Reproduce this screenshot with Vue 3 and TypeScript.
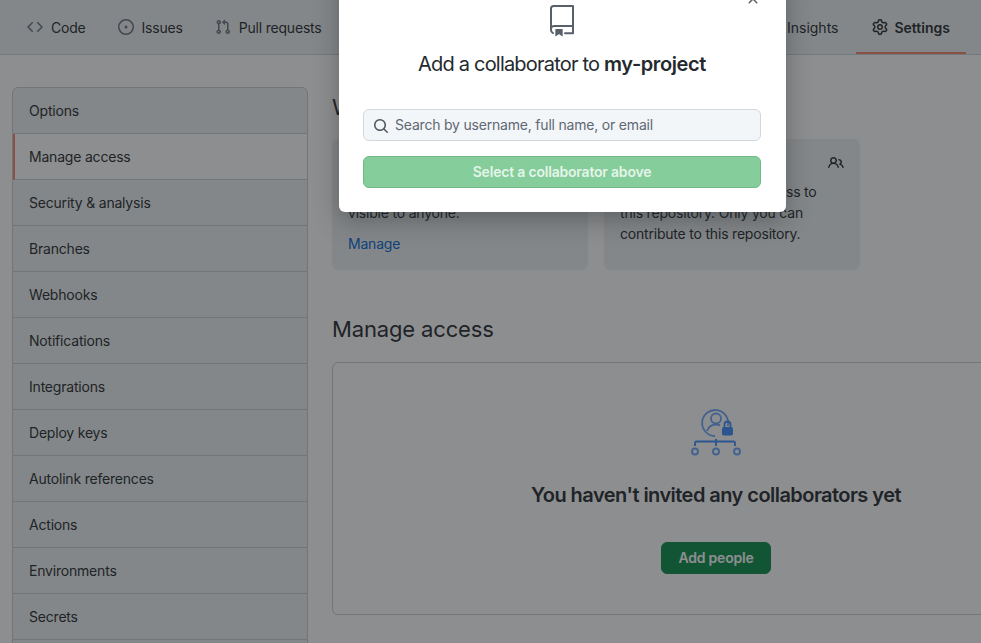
<script setup lang="ts">
const icons: Record<string, string> = {
  code: 'M4.72 3.22a.75.75 0 011.06 1.06L2.06 8l3.72 3.72a.75.75 0 11-1.06 1.06L.47 8.53a.75.75 0 010-1.06l4.25-4.25zm6.56 0a.75.75 0 10-1.06 1.06L13.94 8l-3.72 3.72a.75.75 0 101.06 1.06l4.25-4.25a.75.75 0 000-1.06l-4.25-4.25z',
  issue: 'M8 9.5a1.5 1.5 0 100-3 1.5 1.5 0 000 3zM8 0a8 8 0 100 16A8 8 0 008 0zM1.5 8a6.5 6.5 0 1113 0 6.5 6.5 0 01-13 0z',
  pull: 'M7.177 3.073L9.573.677A.25.25 0 0110 .854v4.792a.25.25 0 01-.427.177L7.177 3.427a.25.25 0 010-.354zM3.75 2.5a.75.75 0 100 1.5.75.75 0 000-1.5zm-2.25.75a2.25 2.25 0 113 2.122v5.256a2.251 2.251 0 11-1.5 0V5.372A2.25 2.25 0 011.5 3.25zM11 2.5h-1V4h1a1 1 0 011 1v5.628a2.251 2.251 0 101.5 0V5A2.5 2.5 0 0011 2.5zm1 10.25a.75.75 0 111.5 0 .75.75 0 01-1.5 0zM3.75 12a.75.75 0 100 1.5.75.75 0 000-1.5z',
  gear: 'M7.429 1.525a6.593 6.593 0 011.142 0c.036.003.108.036.137.146l.289 1.105c.147.56.55.967.997 1.189.174.086.341.183.501.29.417.278.97.423 1.53.27l1.102-.303c.11-.03.175.016.195.046.219.31.41.641.573.989.014.031.022.11-.059.19l-.815.806c-.411.406-.562.957-.53 1.456a4.588 4.588 0 010 .582c-.032.499.119 1.05.53 1.456l.815.806c.08.08.073.159.059.19a6.494 6.494 0 01-.573.99c-.02.029-.086.074-.195.045l-1.103-.303c-.559-.153-1.112-.008-1.529.27-.16.107-.327.204-.5.29-.449.222-.851.628-.998 1.189l-.289 1.105c-.029.11-.101.143-.137.146a6.613 6.613 0 01-1.142 0c-.036-.003-.108-.037-.137-.146l-.289-1.105c-.147-.56-.55-.967-.997-1.189a4.502 4.502 0 01-.501-.29c-.417-.278-.97-.423-1.53-.27l-1.102.303c-.11.03-.175-.016-.195-.046a6.492 6.492 0 01-.573-.989c-.014-.031-.022-.11.059-.19l.815-.806c.411-.406.562-.957.53-1.456a4.587 4.587 0 010-.582c.032-.499-.119-1.05-.53-1.456l-.815-.806c-.08-.08-.073-.159-.059-.19a6.44 6.44 0 01.573-.99c.02-.029.086-.075.195-.045l1.103.303c.559.153 1.112.008 1.529-.27.16-.107.327-.204.5-.29.449-.222.851-.628.998-1.189l.289-1.105c.029-.11.101-.143.137-.146zM8 0c-.236 0-.47.01-.701.03-.743.065-1.29.615-1.458 1.261l-.29 1.106c-.017.066-.078.158-.211.224a5.994 5.994 0 00-.668.386c-.123.082-.233.09-.3.071L3.27 2.776c-.644-.177-1.392.02-1.82.63a7.977 7.977 0 00-.704 1.217c-.315.675-.111 1.422.363 1.891l.815.806c.05.048.098.147.088.294a6.084 6.084 0 000 .772c.01.147-.038.246-.088.294l-.815.806c-.474.469-.678 1.216-.363 1.891.2.428.436.835.704 1.218.428.609 1.176.806 1.82.63l1.103-.303c.066-.019.176-.011.299.071.213.143.436.272.668.386.133.066.194.158.212.224l.289 1.106c.169.646.715 1.196 1.458 1.26a8.094 8.094 0 001.402 0c.743-.064 1.29-.614 1.458-1.26l.29-1.106c.017-.066.078-.158.211-.224a5.98 5.98 0 00.668-.386c.123-.082.233-.09.3-.071l1.102.302c.644.177 1.392-.02 1.82-.63.268-.382.505-.789.704-1.217.315-.675.111-1.422-.364-1.891l-.814-.806c-.05-.048-.098-.147-.088-.294a6.1 6.1 0 000-.772c-.01-.147.039-.246.088-.294l.814-.806c.475-.469.679-1.216.364-1.891a7.992 7.992 0 00-.704-1.218c-.428-.609-1.176-.806-1.82-.63l-1.103.303c-.066.019-.176.011-.299-.071a5.991 5.991 0 00-.668-.386c-.133-.066-.194-.158-.212-.224L10.16 1.29C9.99.645 9.444.095 8.701.031A8.094 8.094 0 008 0zm1.5 8a1.5 1.5 0 11-3 0 1.5 1.5 0 013 0zM11 8a3 3 0 11-6 0 3 3 0 016 0z',
  search: 'M11.5 7a4.499 4.499 0 11-8.998 0A4.499 4.499 0 0111.5 7zm-.82 4.74a6 6 0 111.06-1.06l3.04 3.04a.75.75 0 11-1.06 1.06l-3.04-3.04z',
  people: 'M5.5 3.5a2 2 0 100 4 2 2 0 000-4zM2 5.5a3.5 3.5 0 115.898 2.549 5.507 5.507 0 013.034 4.084.75.75 0 11-1.482.235 4.001 4.001 0 00-7.9 0 .75.75 0 01-1.482-.236A5.507 5.507 0 013.102 8.05 3.49 3.49 0 012 5.5zM11 4a.75.75 0 100 1.5 1.5 1.5 0 01.666 2.844.75.75 0 00-.416.672v.352a.75.75 0 00.574.73c1.2.289 2.162 1.2 2.522 2.372a.75.75 0 101.434-.44 5.01 5.01 0 00-2.56-3.012A3 3 0 0011 4z',
  close: 'M3.72 3.72a.75.75 0 011.06 0L8 6.94l3.22-3.22a.75.75 0 111.06 1.06L9.06 8l3.22 3.22a.75.75 0 11-1.06 1.06L8 9.06l-3.22 3.22a.75.75 0 01-1.06-1.06L6.94 8 3.72 4.78a.75.75 0 010-1.06z',
}

const leftTabs = [
  { label: 'Code', icon: 'code' },
  { label: 'Issues', icon: 'issue' },
  { label: 'Pull requests', icon: 'pull' },
]

const sideItems = [
  'Options',
  'Manage access',
  'Security & analysis',
  'Branches',
  'Webhooks',
  'Notifications',
  'Integrations',
  'Deploy keys',
  'Autolink references',
  'Actions',
  'Environments',
  'Secrets',
  '',
]
</script>

<template>
  <div class="page">
    <header class="tabs">
      <a v-for="tab in leftTabs" :key="tab.label" class="tab">
        <svg class="icon" width="16" height="16" viewBox="0 0 16 16"><path fill-rule="evenodd" :d="icons[tab.icon]" /></svg>
        {{ tab.label }}
      </a>
      <a class="tab tab-right">Insights</a>
      <a class="tab tab-active">
        <svg class="icon" width="16" height="16" viewBox="0 0 16 16"><path fill-rule="evenodd" :d="icons.gear" /></svg>
        Settings
      </a>
    </header>

    <div class="layout">
      <nav class="sidebar">
        <a
          v-for="item in sideItems"
          :key="item"
          class="side-item"
          :class="{ 'side-active': item === 'Manage access' }"
        >{{ item }}</a>
      </nav>

      <main class="content">
        <h2 class="heading who">Who has access</h2>
        <div class="cards">
          <div class="card">
            <div class="card-title">Public repository</div>
            <p>This repository is public and visible to anyone.</p>
            <a class="link">Manage</a>
          </div>
          <div class="card">
            <div class="card-title">
              Direct access
              <svg class="card-icon" width="16" height="16" viewBox="0 0 16 16"><path fill-rule="evenodd" :d="icons.people" /></svg>
            </div>
            <p>0 collaborators have access to this repository. Only you can contribute to this repository.</p>
          </div>
        </div>

        <h2 class="heading">Manage access</h2>
        <section class="empty">
          <svg class="empty-art" width="52" height="52" viewBox="0 0 52 52" fill="none">
            <path d="M37.8 20A13 13 0 1 0 25 30" stroke="#6aa6ff" stroke-width="1.8" />
            <circle cx="26" cy="12.5" r="5" stroke="#6aa6ff" stroke-width="1.8" />
            <path d="M17 25c1.5-4 5-6.500 9-6.500 1.500 0 3 .3 4 1" stroke="#6aa6ff" stroke-width="1.8" />
            <rect x="32.500" y="21.500" width="10" height="7.500" rx="1" fill="#3a8cff" stroke="#3a8cff" />
            <path d="M34.500 21.500V18.500a3 3 0 0 1 6 0v3" stroke="#3a8cff" stroke-width="1.800" />
            <path d="M5 40v-3a1.500 1.500 0 0 1 1.500-1.500h37a1.500 1.500 0 0 1 1.500 1.500v3" stroke="#3a8cff" stroke-width="1.800" />
            <path d="M26 33v7" stroke="#3a8cff" stroke-width="1.800" />
            <circle cx="5" cy="45.500" r="3" stroke="#6aa6ff" stroke-width="2" />
            <circle cx="26" cy="45.500" r="3" stroke="#6aa6ff" stroke-width="2" />
            <circle cx="47" cy="45.500" r="3" stroke="#6aa6ff" stroke-width="2" />
          </svg>
          <h3 class="empty-title">You haven't invited any collaborators yet</h3>
          <button class="add-btn">Add people</button>
        </section>
      </main>
    </div>

    <div class="overlay"></div>

    <div class="modal">
      <svg class="modal-close" width="16" height="16" viewBox="0 0 16 16"><path fill-rule="evenodd" :d="icons.close" /></svg>
      <svg class="repo-icon" width="32" height="32" viewBox="0 0 24 24">
        <path fill-rule="evenodd" d="M3 2.750A2.750 2.750 0 0 1 5.750 0h14.500a.75.75 0 0 1 .75.75v20.500a.75.75 0 0 1-.75.75h-6a.75.75 0 0 1 0-1.500h5.250v-4H6A1.500 1.500 0 0 0 4.500 18v.75c0 .716.43 1.334 1.050 1.605a.75.75 0 0 1-.6 1.374A3.250 3.250 0 0 1 3 18.750v-16zM19.500 1.500V15H6c-.546 0-1.059.146-1.500.401V2.750c0-.69.56-1.250 1.250-1.250H19.500z" />
        <path d="M7 18.250a.25.25 0 0 1 .25-.25h5a.25.25 0 0 1 .25.25v5.010a.25.25 0 0 1-.397.201l-2.206-1.604a.25.25 0 0 0-.294 0L7.397 23.460a.25.25 0 0 1-.397-.2v-5.010z" />
      </svg>
      <h1 class="modal-title">Add a collaborator to <strong>my-project</strong></h1>
      <div class="search">
        <svg class="search-icon" width="16" height="16" viewBox="0 0 16 16"><path fill-rule="evenodd" :d="icons.search" /></svg>
        <span class="placeholder">Search by username, full name, or email</span>
      </div>
      <button class="select-btn" disabled>Select a collaborator above</button>
    </div>
  </div>
</template>

<style>
html,
body {
  margin: 0;
  overflow: hidden;
}
</style>

<style scoped>
.page {
  position: relative;
  width: 981px;
  height: 643px;
  overflow: hidden;
  background: #ffffff;
  color: #24292e;
  font-family: Inter, "Liberation Sans", sans-serif;
  font-size: 14px;
  letter-spacing: -0.2px;
}

.tabs {
  display: flex;
  box-sizing: border-box;
  height: 55px;
  padding: 0 15px 0 11px;
  background: #ecf1f3;
  border-bottom: 1px solid #ccd2d6;
}

.tab {
  display: flex;
  align-items: center;
  gap: 8px;
  padding: 0 16px;
  height: 54px;
  box-sizing: border-box;
}

.icon {
  fill: #6a737d;
}

.tab-right {
  margin-left: auto;
  padding-right: 18px;
  letter-spacing: 0;
}

.tab-active {
  font-weight: 600;
  letter-spacing: 0;
  border-bottom: 2px solid #f9826c;
  padding-top: 2px;
  gap: 6px;
}

.tab-active .icon {
  fill: #24292e;
}

.layout {
  display: flex;
  align-items: flex-start;
  gap: 24px;
  padding: 32px 0 0 12px;
}

.sidebar {
  flex: none;
  display: flex;
  flex-direction: column;
  width: 296px;
  box-sizing: border-box;
  background: #ecf1f3;
  border: 1px solid #c8ced3;
  border-radius: 6px;
}

.side-item {
  display: flex;
  align-items: center;
  box-sizing: border-box;
  height: 46px;
  padding-left: 16px;
  border-bottom: 1px solid #c8ced3;
}

.side-active {
  background: #ffffff;
  padding-left: 14px;
  border-left: 2px solid #f9826c;
}

.content {
  flex: none;
  width: 768px;
}

.heading {
  margin: 0;
  font-size: 22px;
  line-height: 32px;
  font-weight: 400;
  letter-spacing: -0.15px;
}

.who {
  margin-top: 4px;
}

.cards {
  display: flex;
  gap: 16px;
  margin-top: 16px;
}

.card {
  box-sizing: border-box;
  width: 256px;
  height: 131px;
  padding: 16px;
  background: #ecf1f3;
  border-radius: 6px;
  line-height: 21px;
}

.card p {
  margin: 6px 0 10px;
  padding-right: 20px;
}

.card-title {
  display: flex;
  justify-content: space-between;
  font-weight: 600;
  height: 20px;
}

.link {
  color: #0366d6;
}

.card-icon {
  fill: #24292e;
}

.cards + .heading {
  margin-top: 43px;
}

.empty {
  display: flex;
  flex-direction: column;
  align-items: center;
  box-sizing: border-box;
  height: 253px;
  margin-top: 17px;
  padding-top: 43px;
  border: 1px solid #c8ced3;
  border-radius: 6px;
}

.empty-art {
  flex: none;
}

.empty-title {
  margin: 23px 0 0;
  font-size: 20px;
  line-height: 28px;
  font-weight: 600;
  letter-spacing: -0.55px;
}

.add-btn {
  margin-top: 33px;
  width: 110px;
  height: 32px;
  padding: 0 0 1px;
  border: 1px solid #0c8a4c;
  border-radius: 6px;
  background: #068d4b;
  color: #ffffff;
  font: 600 14px Inter, "Liberation Sans", sans-serif;
  letter-spacing: -0.2px;
}

.overlay {
  position: absolute;
  inset: 0;
  background: rgba(27, 29, 32, 0.5);
}

.modal {
  position: absolute;
  top: -32px;
  left: 339px;
  display: flex;
  flex-direction: column;
  align-items: center;
  box-sizing: border-box;
  width: 447px;
  height: 244px;
  padding: 37px 25px 0 24px;
  background: #ffffff;
  border-radius: 6px;
  box-shadow: 0 8px 24px rgba(27, 31, 35, 0.35);
}

.modal-close {
  position: absolute;
  top: 23px;
  right: 25px;
  fill: #586069;
}

.repo-icon {
  flex: none;
  fill: #586069;
}

.modal-title {
  margin: 12px 0 0;
  font-size: 20px;
  line-height: 30px;
  font-weight: 400;
  letter-spacing: -0.8px;
}

.modal-title strong {
  font-weight: 600;
  letter-spacing: -0.4px;
}

.search {
  display: flex;
  align-items: center;
  gap: 6px;
  box-sizing: border-box;
  width: 398px;
  height: 32px;
  margin-top: 30px;
  padding: 0 10px 1px 9px;
  background: #f3f6f9;
  border: 1px solid #d1d8de;
  border-radius: 6px;
}

.search-icon {
  flex: none;
  fill: #4e5660;
  margin-top: 2px;
}

.placeholder {
  color: #5f6872;
}

.select-btn {
  width: 398px;
  height: 32px;
  margin-top: 15px;
  padding: 0 0 1px;
  background: #85cd9a;
  border: 1px solid #72b887;
  border-radius: 6px;
  color: rgba(255, 255, 255, 0.8);
  font: 600 14px Inter, "Liberation Sans", sans-serif;
  letter-spacing: -0.2px;
}
</style>
